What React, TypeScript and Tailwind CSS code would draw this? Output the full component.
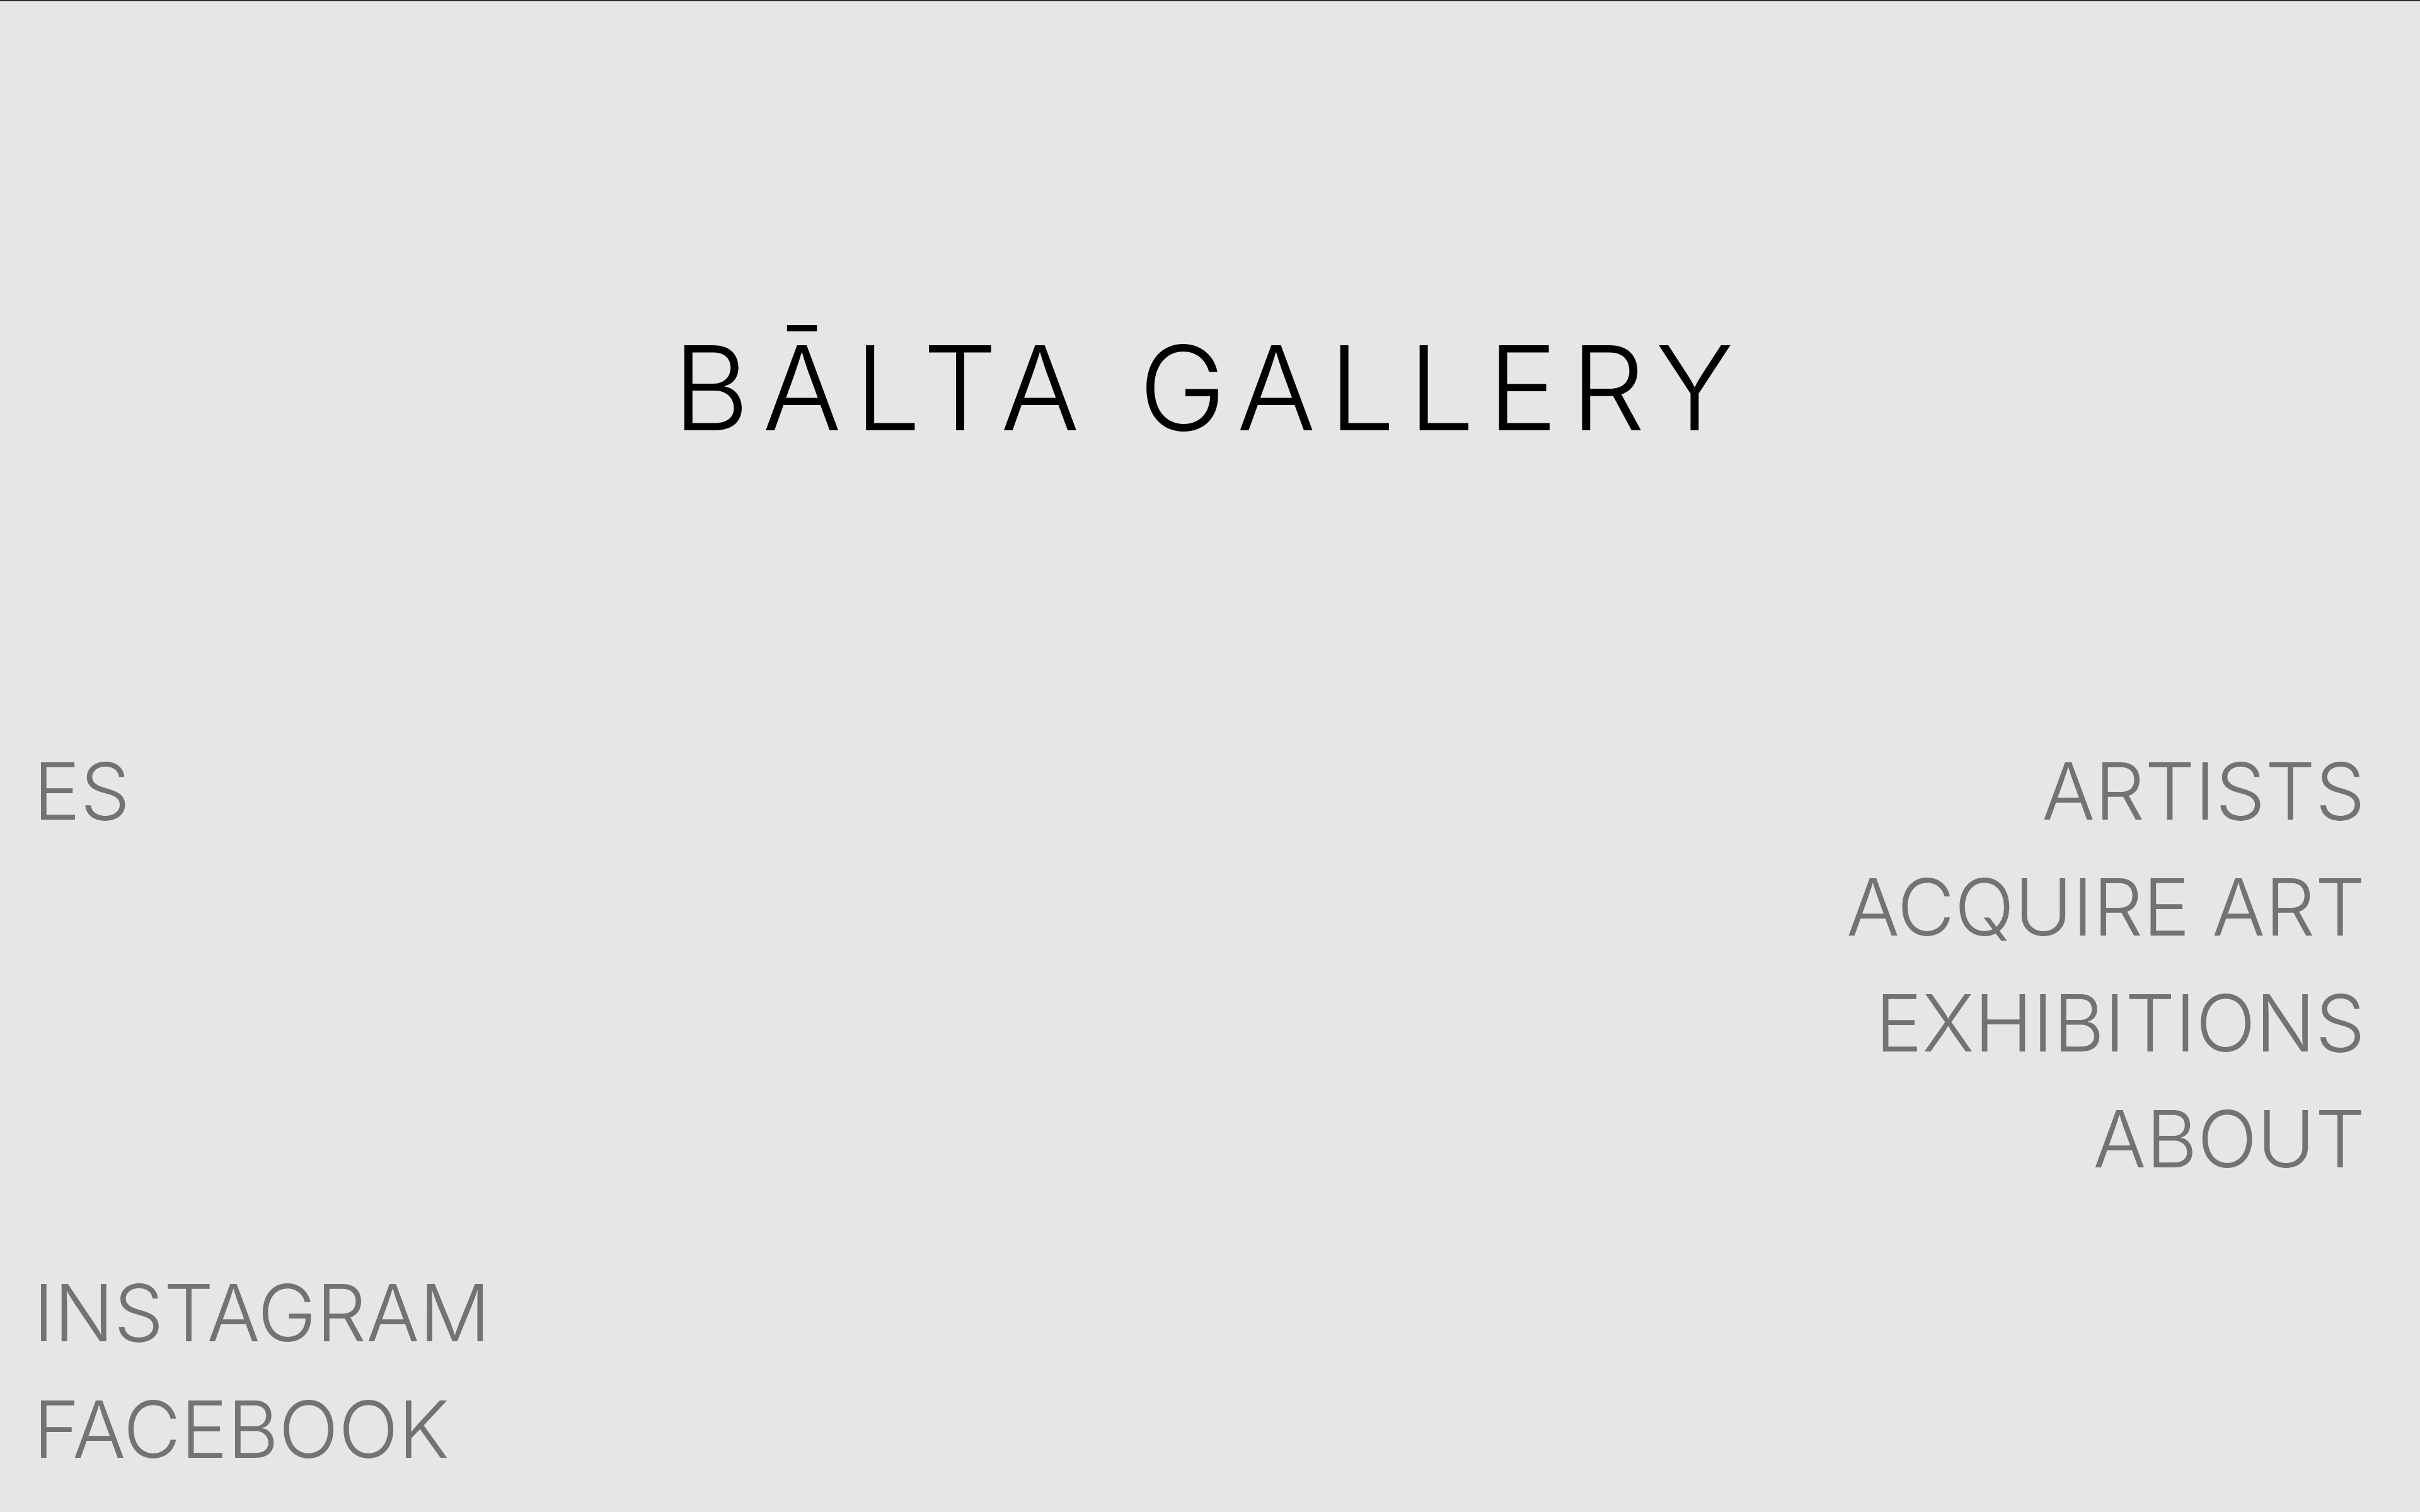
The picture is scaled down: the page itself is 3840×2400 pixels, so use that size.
import React from 'react';

const navLinks = ['ARTISTS', 'ACQUIRE ART', 'EXHIBITIONS', 'ABOUT'];
const socialLinks = ['INSTAGRAM', 'FACEBOOK'];

const App: React.FC = () => {
  return (
    <div className="h-[2400px] overflow-hidden bg-[#e6e6e6] border-t-2 border-[#2b2b2b] font-['Inter',_'Liberation_Sans',_sans-serif] flex flex-col">
      <header className="pt-[521px] text-center">
        <h1 className="text-[186px] leading-none font-[350] tracking-[0.113em] text-black">
          BĀLTA GALLERY
        </h1>
      </header>

      <main className="mt-[455px] flex justify-between pl-[53px] pr-[87px] text-[125px] leading-[184px] font-[350] text-[#737373]">
        <div>
          <a href="#">ES</a>
        </div>
        <nav className="flex flex-col items-end">
          {navLinks.map((label) => (
            <a key={label} href="#">
              {label}
            </a>
          ))}
        </nav>
      </main>

      <footer className="mt-[91px] flex flex-col pl-[53px] text-[125px] leading-[185px] font-[350] text-[#737373]">
        {socialLinks.map((label) => (
          <a key={label} href="#">
            {label}
          </a>
        ))}
      </footer>
    </div>
  );
};

export default App;
